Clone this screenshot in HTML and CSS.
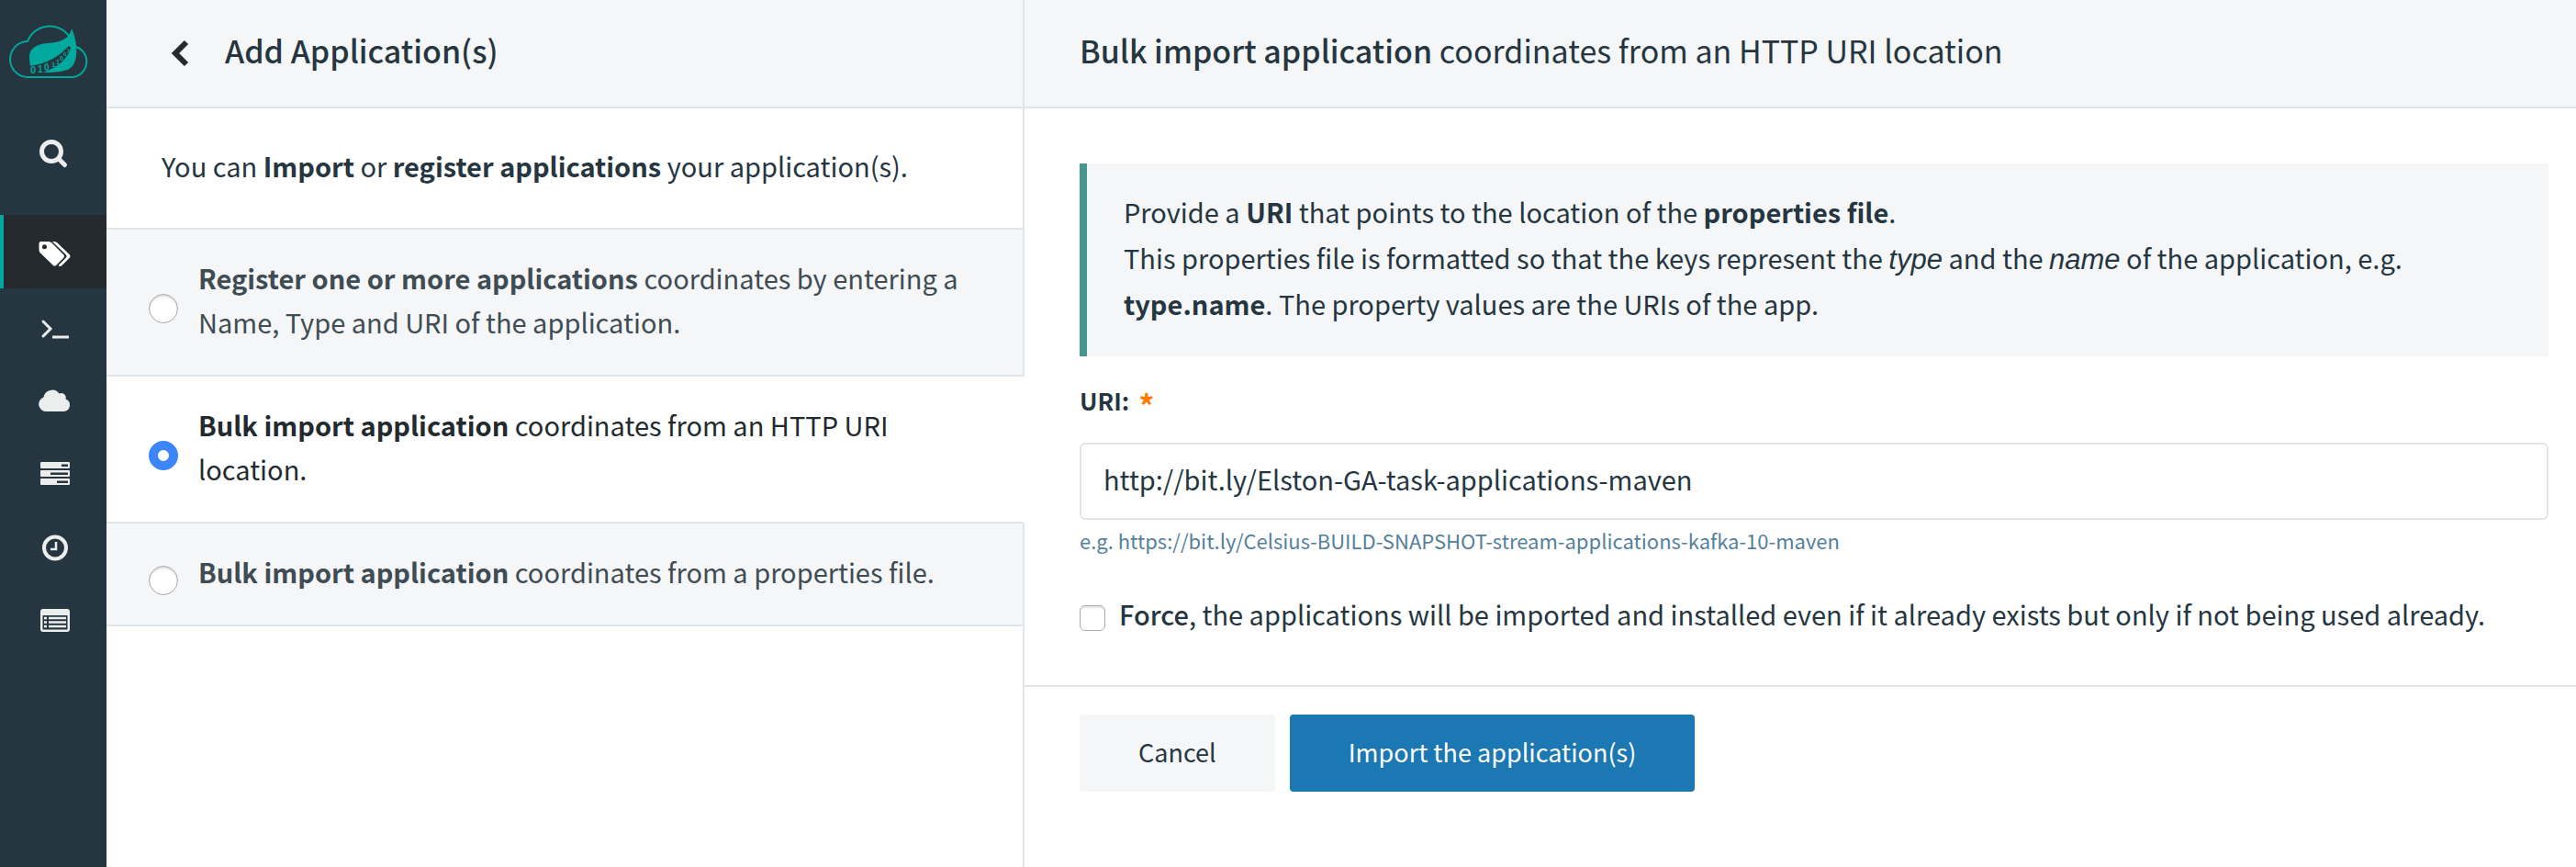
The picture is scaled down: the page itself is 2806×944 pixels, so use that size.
FILE: index.html
```html
<!DOCTYPE html>
<html lang="en">
<head>
<meta charset="utf-8">
<title>Add Application(s)</title>
<link rel="stylesheet" href="styles.css">
</head>
<body>
<div class="app">
  <nav class="sidebar" aria-label="Main">
    <a class="logo" href="#" aria-label="Home">
      <svg viewBox="0 0 116 116" aria-hidden="true">
        <path class="logo-cloud" d="M31 84H78A17 17 0 0 0 83 51M75 39A26 26 0 0 0 30 45A19.500 19.500 0 0 0 31 84"/>
        <path class="logo-leaf" d="M78 31C76 42 66 46 52 47C38 48 31 54 32 64L33 72L48 79C62 79 74 78 79 72C86 62 84 44 78 31Z"/>
        <path class="logo-band" d="M31 72C50 70 64 62 75 50L77 52C74 63 64 73 47 79L31 83Z"/>
        <g class="logo-digits">
          <text x="33" y="80" font-size="11">0</text>
          <text x="41" y="79" font-size="10">1</text>
          <text x="48" y="77" font-size="10">0</text>
          <text x="56" y="73" font-size="8">1</text>
          <text x="61" y="70" font-size="7">1</text>
          <text x="65" y="66" font-size="7">0</text>
          <text x="69" y="61" font-size="6">0</text>
          <text x="73" y="57" font-size="5">1</text>
        </g>
      </svg>
    </a>
    <a class="nav-item nav-search" href="#" aria-label="Search">
      <svg viewBox="0 0 40 40" aria-hidden="true"><circle cx="16" cy="17" r="10.500" fill="none" stroke="currentColor" stroke-width="5"/><path d="M24 25l6.500 6.500" fill="none" stroke="currentColor" stroke-width="5" stroke-linecap="round"/></svg>
    </a>
    <a class="nav-item nav-active" href="#" aria-label="Apps">
      <svg viewBox="0 0 40 40" aria-hidden="true"><path fill="currentColor" fill-rule="evenodd" d="M4.500 9H13Q15 9 16.500 10.500L29 23Q31 25 29 27L21 35Q19.500 36.500 18 35L4 21.500Q2.500 20 2.500 18V11Q2.500 9 4.500 9ZM8.500 12.300A2.500 2.500 0 1 0 8.500 17.300A2.500 2.500 0 1 0 8.500 12.300Z"/><path fill="currentColor" d="M17 9H19.500Q21 9 22.500 10.500L35.500 23Q37.500 25 35.500 27L27.500 35Q25.500 37 23.500 35L32 26.500Q33.300 25 32 23.500Z"/></svg>
    </a>
    <a class="nav-item" href="#" aria-label="Runtime">
      <svg viewBox="0 0 40 40" aria-hidden="true"><path d="M7 16l8 8-8 8" fill="none" stroke="currentColor" stroke-width="3" stroke-linecap="round"/><path d="M17 33h18" stroke="currentColor" stroke-width="3"/></svg>
    </a>
    <a class="nav-item" href="#" aria-label="Streams">
      <svg viewBox="0 0 40 40" aria-hidden="true"><path fill="currentColor" d="M11 34A8 8 0 0 1 7.500 18.500A9.500 9.500 0 0 1 24.500 14.500A5 5 0 0 1 31.500 20.500A7 7 0 0 1 30 34Z"/></svg>
    </a>
    <a class="nav-item" href="#" aria-label="Tasks">
      <svg viewBox="0 0 40 40" aria-hidden="true"><path fill="currentColor" fill-rule="evenodd" d="M5 9H35Q36 9 36 10V15Q36 16 35 16H5Q4 16 4 15V10Q4 9 5 9ZM27 11.500V14H34V11.500ZM5 18H35Q36 18 36 19V24Q36 25 35 25H5Q4 25 4 24V19Q4 18 5 18ZM15 20.500V23H34V20.500ZM5 27H35Q36 27 36 28V33Q36 34 35 34H5Q4 34 4 33V28Q4 27 5 27ZM22 29.500V32H34V29.500Z"/></svg>
    </a>
    <a class="nav-item" href="#" aria-label="Jobs">
      <svg viewBox="0 0 40 40" aria-hidden="true"><circle cx="20" cy="22.500" r="12" fill="none" stroke="currentColor" stroke-width="4"/><path d="M21 16v8h-6" fill="none" stroke="currentColor" stroke-width="2.500"/></svg>
    </a>
    <a class="nav-item" href="#" aria-label="Audit records">
      <svg viewBox="0 0 40 40" aria-hidden="true"><path fill="currentColor" fill-rule="evenodd" d="M7 9H33Q36 9 36 12V31Q36 34 33 34H7Q4 34 4 31V12Q4 9 7 9ZM6.500 16V31.500H33.500V16Z"/><path d="M8 19h3M13 19h19M8 23.500h3M13 23.500h19M8 28h3M13 28h19" stroke="currentColor" stroke-width="2.500"/></svg>
    </a>
  </nav>

  <aside class="steps">
    <header class="bar bar-steps">
      <button class="back" type="button" aria-label="Back">
        <svg viewBox="0 0 20 32" aria-hidden="true"><path d="M17 4L5 16L17 28" fill="none" stroke="currentColor" stroke-width="6"/></svg>
      </button>
      <h1 class="title title-strong">Add Application(s)</h1>
    </header>
    <p class="intro">You can <strong>Import</strong> or <strong>register applications</strong> your application(s).</p>
    <label class="option">
      <input class="radio" type="radio" name="mode">
      <span><strong>Register one or more applications</strong> coordinates by entering a Name, Type and URI of the application.</span>
    </label>
    <label class="option option-on">
      <input class="radio" type="radio" name="mode" checked>
      <span><strong>Bulk import application</strong> coordinates from an HTTP URI location.</span>
    </label>
    <label class="option">
      <input class="radio" type="radio" name="mode">
      <span><strong>Bulk import application</strong> coordinates from a properties file.</span>
    </label>
    <div class="rest"></div>
  </aside>

  <main class="main">
    <header class="bar bar-main">
      <h2 class="title"><strong>Bulk import application</strong> coordinates from an HTTP URI location</h2>
    </header>
    <form class="form">
      <div class="fields">
        <div class="callout">Provide a <strong>URI</strong> that points to the location of the <strong>properties file</strong>.<br>This properties file is formatted so that the keys represent the <em>type</em> and the <em>name</em> of the application, e.g. <strong>type.name</strong>. The property values are the URIs of the app.</div>
        <label class="label" for="uri">URI: <span class="required">*</span></label>
        <input class="input" id="uri" type="text" value="http://bit.ly/Elston-GA-task-applications-maven">
        <p class="hint">e.g. https://bit.ly/Celsius-BUILD-SNAPSHOT-stream-applications-kafka-10-maven</p>
        <label class="force">
          <input class="check" type="checkbox">
          <span><strong>Force</strong>, the applications will be imported and installed even if it already exists but only if not being used already.</span>
        </label>
      </div>
      <div class="actions">
        <button class="btn" type="button">Cancel</button>
        <button class="btn btn-primary" type="submit">Import the application(s)</button>
      </div>
    </form>
  </main>
</div>
</body>
</html>
```
FILE: styles.css
```css
* { box-sizing: border-box; }

body {
  margin: 0;
  background: #fff;
  color: #253641;
  font-family: "Noto Sans CJK SC", "Noto Sans", sans-serif;
  font-size: 29px;
  line-height: 48px;
}

strong { font-weight: 700; }

.app { display: flex; min-height: 100vh; }

.sidebar {
  flex: 0 0 116px;
  display: flex;
  flex-direction: column;
  background: #253641;
}
.logo { display: block; height: 116px; }
.logo svg { display: block; width: 116px; height: 116px; }
.logo-cloud { fill: none; stroke: #00a99d; stroke-width: 2; }
.logo-leaf { fill: #00a99d; }
.logo-band { fill: #253641; }
.logo-digits { fill: #00a99d; font-family: "Liberation Sans", sans-serif; font-weight: 700; }

.nav-item {
  display: flex;
  align-items: center;
  justify-content: center;
  height: 80px;
  border-left: 4px solid transparent;
  color: #eceeee;
}
.nav-item svg { width: 40px; height: 40px; }
.nav-search { height: 118px; padding-bottom: 14px; }
.nav-active { border-left-color: #00a99d; background: #242a2d; color: #fff; }

.steps { flex: 0 0 1000px; display: flex; flex-direction: column; }

.bar {
  display: flex;
  align-items: center;
  height: 118px;
  border-bottom: 2px solid #dfe5e9;
  background: #f4f6f8;
}
.bar-steps { padding-left: 68px; gap: 37px; border-right: 2px solid #dfe5e9; }
.bar-main { padding-left: 60px; }

.title { margin: 0; padding-bottom: 6px; font-size: 34px; line-height: 52px; font-weight: 400; }
.title-strong, .title strong { font-weight: 500; }

.back { display: flex; padding: 0; border: 0; background: none; color: #242a2d; }
.back svg { width: 24px; height: 32px; }

.intro {
  margin: 0;
  padding: 38px 58px 44px 60px;
  border-right: 2px solid #dfe5e9;
  border-bottom: 2px solid #dfe5e9;
}

.option {
  display: flex;
  align-items: center;
  gap: 22px;
  padding: 0 60px 0 46px;
  border-right: 2px solid #dfe5e9;
  border-bottom: 2px solid #dfe5e9;
  background: #f4f6f8;
  color: #3f4c53;
}
.option span { padding: 28px 0 34px; }
.option-on { border-right-color: transparent; background: #fff; color: #222a2e; }

.radio {
  appearance: none;
  flex: none;
  width: 32px;
  height: 32px;
  margin: 14px 0 0;
  border: 1px solid #a9abac;
  border-radius: 50%;
  background: #fff;
  box-shadow: inset 0 2px 2px #dcdcdc;
}
.radio:checked { border: 10px solid #3b86fb; box-shadow: none; }

.rest { flex: 1; border-right: 2px solid #dfe5e9; }

.main { flex: 1; min-width: 0; }

.fields { padding: 60px 30px 54px 60px; border-bottom: 2px solid #dfe5e9; }

.callout {
  padding: 27px 40px 33px;
  border-left: 8px solid #45968f;
  background: #f4f6f8;
  line-height: 50px;
}
.callout em { font-family: "Liberation Sans", sans-serif; font-size: 31px; font-style: italic; line-height: 1; }

.label { display: block; margin-top: 22px; font-size: 26px; line-height: 52px; font-weight: 700; }
.required { margin-left: 4px; color: #ff7a00; font-size: 34px; line-height: 0; vertical-align: -8px; }

.input {
  display: block;
  width: 100%;
  height: 84px;
  margin-top: 20px;
  padding: 0 24px 6px;
  border: 2px solid #dfe5e9;
  border-radius: 6px;
  background: #fff;
  color: inherit;
  font: inherit;
}

.hint { margin: 4px 0 0; color: #54819c; font-size: 22px; line-height: 36px; }

.force { display: flex; align-items: flex-start; gap: 15px; margin-top: 38px; }
.force strong { font-weight: 500; }
.check {
  appearance: none;
  flex: none;
  width: 28px;
  height: 28px;
  margin: 15px 0 0;
  border: 1px solid #a9abac;
  border-radius: 6px;
  background: #fff;
  box-shadow: inset 0 2px 2px #e4e4e4;
}

.actions { display: flex; gap: 16px; padding: 30px 30px 30px 60px; }
.btn {
  height: 84px;
  padding: 0 64px 2px;
  border: 0;
  border-radius: 4px;
  background: #f4f6f8;
  color: #253641;
  font: inherit;
  font-size: 27px;
}
.btn-primary { background: #1b78b3; color: #fff; }
```
